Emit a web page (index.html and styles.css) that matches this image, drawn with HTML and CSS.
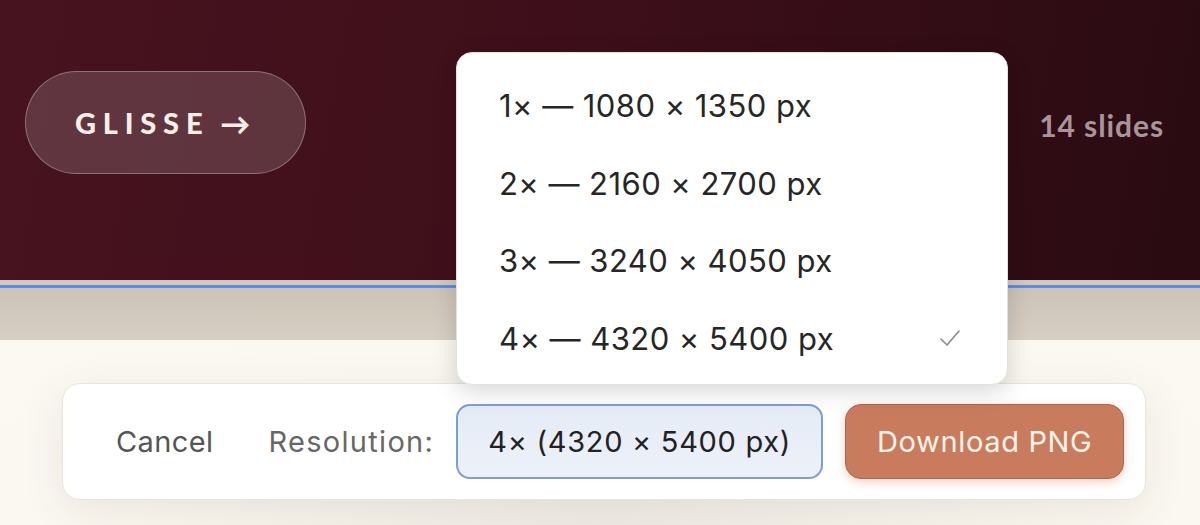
FILE: index.html
```html
<!DOCTYPE html>
<html>
<head>
<meta charset="utf-8">
<link rel="stylesheet" href="styles.css">
</head>
<body>
<div class="stage">
  <header class="hero">
    <div class="brand-pill">GLISSE <span class="arrow">→</span></div>
    <div class="count">14 slides</div>
  </header>
  <div class="strip"></div>
  <div class="focus-line"></div>
  <div class="band"></div>
  <main class="cream">
    <div class="bar">
      <button class="cancel">Cancel</button>
      <span class="label">Resolution:</span>
      <div class="select">4× (4320 × 5400 px)</div>
      <button class="download">Download PNG</button>
    </div>
  </main>
  <ul class="menu">
    <li class="item">1× — 1080 × 1350 px</li>
    <li class="item">2× — 2160 × 2700 px</li>
    <li class="item">3× — 3240 × 4050 px</li>
    <li class="item selected">4× — 4320 × 5400 px
      <svg class="check" width="22" height="18" viewBox="0 0 22 18"><polyline points="2,10 8,16 20,2" fill="none" stroke="#8a8a8a" stroke-width="1.6" stroke-linecap="round" stroke-linejoin="round"/></svg>
    </li>
  </ul>
</div>
</body>
</html>
```

FILE: styles.css
```css
* { box-sizing: border-box; }
html, body { margin: 0; padding: 0; }
body {
  width: 1200px;
  height: 525px;
  overflow: hidden;
  font-family: "Inter", "Liberation Sans", sans-serif;
  background: #fbf8f1;
}
.stage {
  position: relative;
  width: 1200px;
  height: 525px;
  display: flex;
  flex-direction: column;
}
.hero {
  height: 280px;
  flex: none;
  background: linear-gradient(100deg, #47131f 0%, #3e0f1a 45%, #2a0b12 100%);
  display: flex;
  justify-content: space-between;
  align-items: flex-start;
  padding: 71px 36px 0 25px;
}
.brand-pill {
  width: 281px;
  height: 103px;
  border-radius: 52px;
  background: rgba(255, 255, 255, 0.15);
  border: 1.5px solid rgba(255, 255, 255, 0.3);
  color: #f7eee8;
  font-family: "Lato", "Liberation Sans", sans-serif;
  font-weight: 900;
  font-size: 29px;
  letter-spacing: 6.8px;
  display: flex;
  align-items: center;
  padding-left: 49px;
}
.arrow { letter-spacing: 0; margin-left: 11px; font-weight: 900; font-size: 30px; }
.count {
  margin-top: 36px;
  font-family: "Lato", "Liberation Sans", sans-serif;
  font-weight: 700;
  font-size: 30px;
  color: #a8959a;
  letter-spacing: 0.9px;
}
.strip { height: 5px; flex: none; background: #d3c9be; }
.focus-line { height: 2.5px; flex: none; background: #5b8ded; }
.band {
  height: 52.5px;
  flex: none;
  background: linear-gradient(180deg, #cdc3b7 0%, #d7cfc4 100%);
}
.cream {
  flex: 1;
  background: radial-gradient(ellipse at 50% 100%, #efebe4 0%, #fbf8f1 60%, #fcf9f3 100%);
  padding: 43px 54px 0 62px;
}
.bar {
  width: 1084px;
  height: 117px;
  background: #fff;
  border: 1.5px solid #e7e5e1;
  border-radius: 18px;
  box-shadow: 0 10px 40px rgba(90, 70, 50, 0.10);
  display: flex;
  align-items: center;
  padding-left: 53px;
}
.cancel {
  border: none;
  background: none;
  padding: 0;
  font-family: inherit;
  font-size: 29px;
  letter-spacing: 0.4px;
  color: #555;
}
.label {
  margin-left: 55px;
  font-size: 29px;
  letter-spacing: 1.3px;
  color: #676767;
}
.select {
  margin-left: 22px;
  width: 367px;
  height: 75px;
  border: 2px solid #7c9fd3;
  border-radius: 14px;
  background: linear-gradient(180deg, #e5ebf6 0%, #edf1f9 100%);
  display: flex;
  align-items: center;
  justify-content: center;
  font-size: 29px;
  letter-spacing: 0.7px;
  color: #222;
}
.download {
  margin-left: 22px;
  width: 279px;
  height: 75px;
  border: 1.5px solid #b0664b;
  border-radius: 16px;
  background: #c97b5d;
  color: #fdf4ec;
  font-family: inherit;
  font-size: 29px;
  letter-spacing: 0.65px;
  box-shadow: 0 3px 10px rgba(201, 123, 93, 0.35);
}
.menu {
  position: absolute;
  left: 456px;
  top: 52px;
  width: 552px;
  height: 333px;
  margin: 0;
  padding: 14px 0 0 0;
  list-style: none;
  background: #fff;
  border: 1px solid #e2e2e2;
  border-radius: 16px;
  box-shadow: 0 6px 24px rgba(0, 0, 0, 0.16);
}
.item {
  height: 77.5px;
  display: flex;
  align-items: center;
  padding-left: 42px;
  padding-right: 46px;
  font-size: 31px;
  letter-spacing: 0.45px;
  color: #262626;
}
.check { margin-left: auto; }
```
